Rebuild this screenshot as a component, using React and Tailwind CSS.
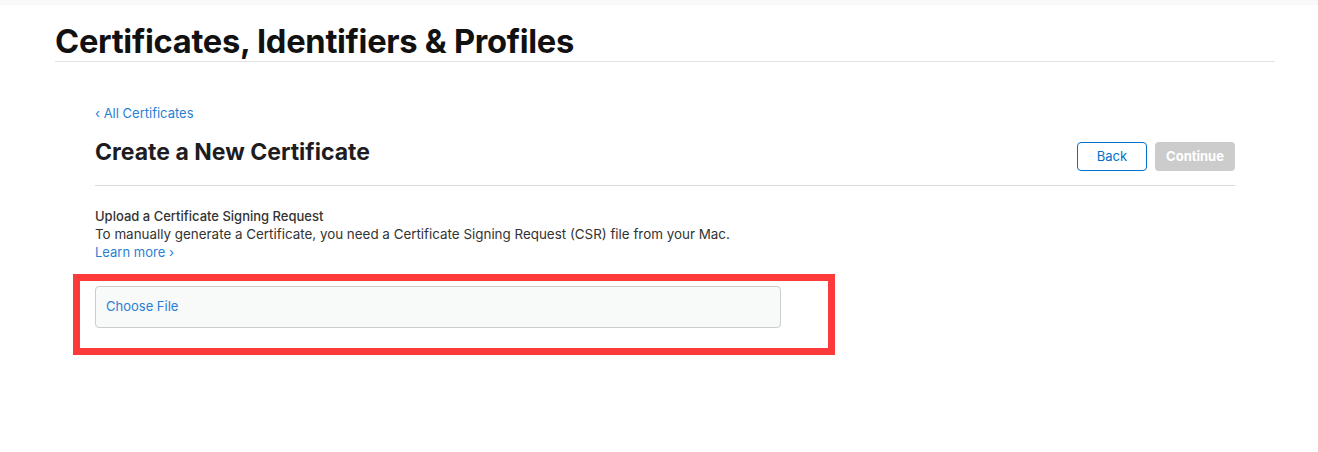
import React from "react";

const font = { fontFamily: "Inter, 'Liberation Sans', sans-serif" };

function App() {
  return (
    <div className="min-h-[452px] bg-white text-[#1d1d1f]" style={font}>
      <div className="h-[5px] bg-[#f9f9f9]" />
      <div className="ml-[55px] w-[1220px] border-b border-[#e3e3e3] pt-[17px]">
        <h1 className="text-[32.7px] font-bold leading-[39px] tracking-[-0.3px] text-[#111]">
          Certificates, Identifiers &amp; Profiles
        </h1>
      </div>

      <div className="ml-[95px] w-[1140px]">
        <a href="#" className="mt-[42px] block text-[13px] leading-[18px] text-[#2a7fd4]">
          ‹ All Certificates
        </a>
        <div className="flex items-start justify-between border-b border-[#dadada] pt-[17px] pb-[14px]">
          <h2 className="text-[23px] font-bold leading-[26px] text-[#1d1d1f]">
            Create a New Certificate
          </h2>
          <div className="mt-[3px] flex gap-[8px]">
            <button className="h-[29px] w-[70px] rounded-[4px] border border-[#0070c9] text-[13px] text-[#0070c9]">
              Back
            </button>
            <button className="h-[29px] w-[80px] rounded-[4px] bg-[#cccccc] text-[13px] font-bold text-white">
              Continue
            </button>
          </div>
        </div>

        <div className="pt-[21px] text-[13px] leading-[18px]">
          <p className="font-medium text-[#333]">Upload a Certificate Signing Request</p>
          <p className="text-[13.4px] text-[#333]">
            To manually generate a Certificate, you need a Certificate Signing Request (CSR) file from your Mac.
          </p>
          <a href="#" className="text-[#2a7fd4]">Learn more ›</a>
        </div>

        <div className="-ml-[22px] mt-[13px] w-[762px] border-[7px] border-[#fc3a3a] pt-[5px] pr-[47px] pb-[20px] pl-[15px]">
          <label className="flex h-[42px] items-center rounded-[4px] border border-[#cccccc] bg-[#f8f9f9] px-[10px] text-[13px] text-[#2a7fd4]">
            Choose File
          </label>
        </div>
      </div>
    </div>
  );
}

export default App;
